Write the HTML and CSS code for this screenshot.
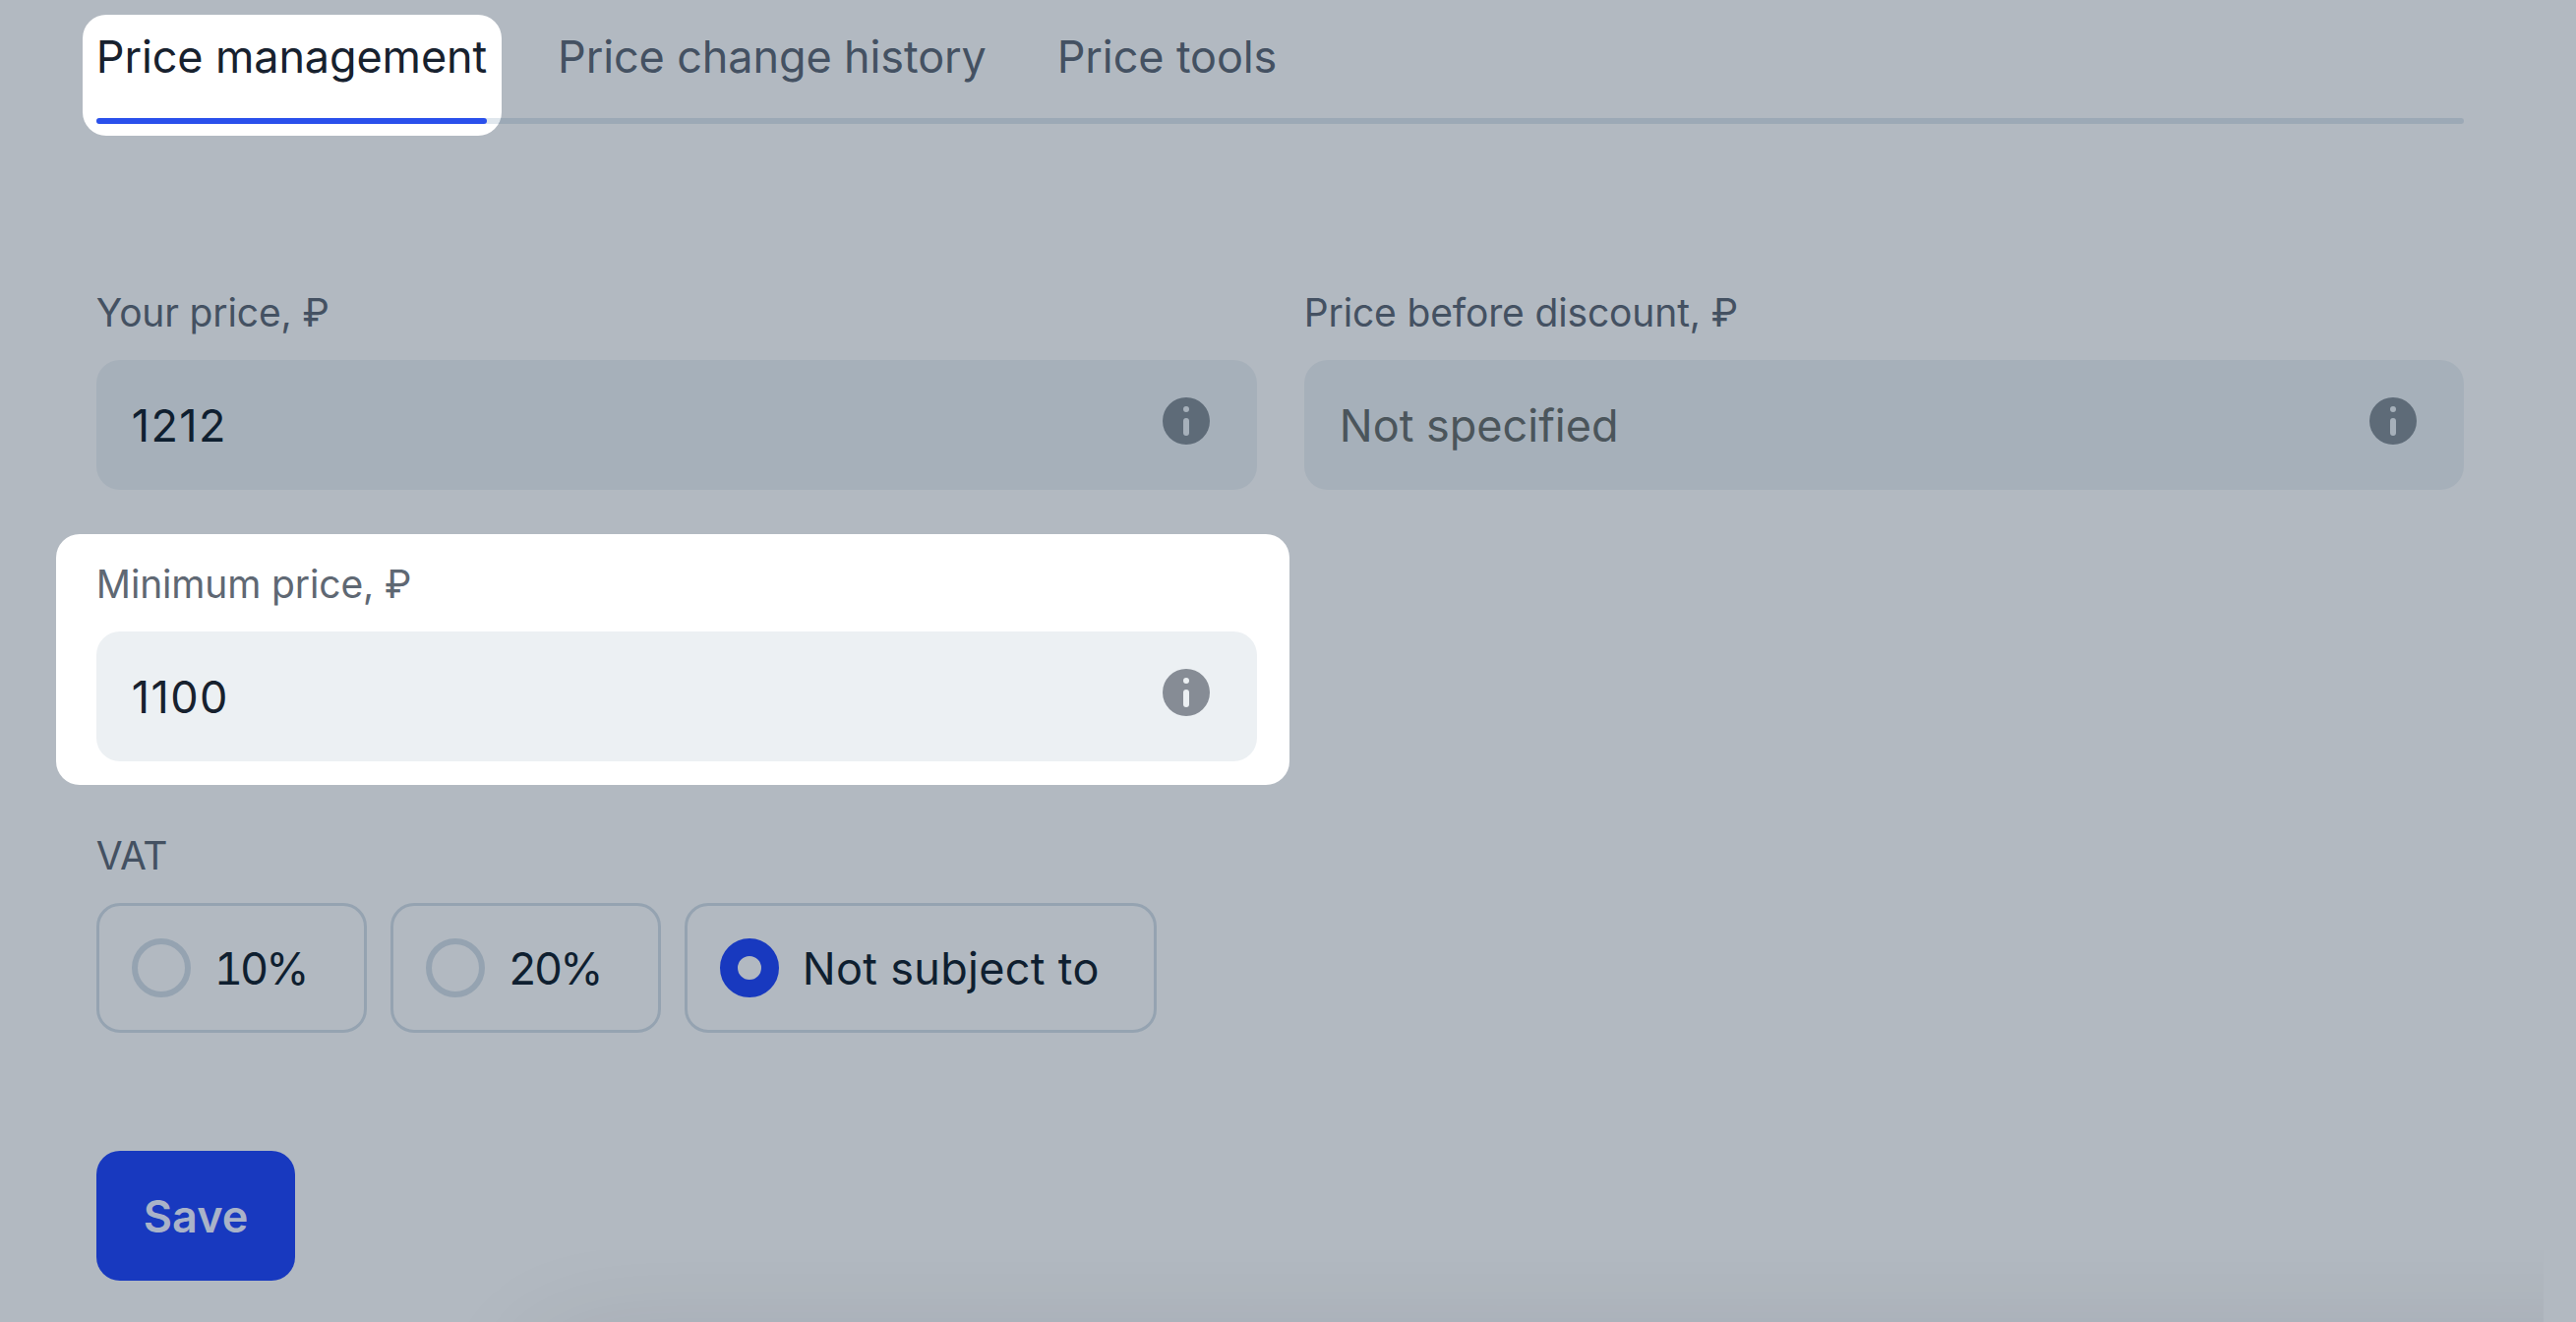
FILE: index.html
```html
<!DOCTYPE html>
<html lang="en">

<head>
    <meta charset="UTF-8">
    <meta name="viewport" content="width=device-width, initial-scale=1.0">
    <title>Price management</title>

    <link rel="stylesheet" href="styles.css">
</head>

<body>
    <svg class="sprite">
        <symbol id="info" viewBox="0 0 48 48">
            <circle cx="24" cy="24" r="24" fill="currentColor" />
            <circle class="info-mark" cx="24" cy="12" r="3" />
            <rect class="info-mark" x="21" y="21" width="6" height="18" rx="3" />
        </symbol>
    </svg>

    <main class="page">
        <nav class="tabs">
            <a class="tab active">Price management</a>
            <a class="tab">Price change history</a>
            <a class="tab">Price tools</a>
        </nav>

        <form class="form">
            <div class="fields">
                <div class="field">
                    <div class="label">Your price, ₽</div>
                    <div class="input">
                        <span class="value">1212</span>
                        <svg class="info"><use href="#info" /></svg>
                    </div>
                </div>
                <div class="field">
                    <div class="label">Price before discount, ₽</div>
                    <div class="input">
                        <span class="placeholder">Not specified</span>
                        <svg class="info"><use href="#info" /></svg>
                    </div>
                </div>
                <div class="field spotlight">
                    <div class="label">Minimum price, ₽</div>
                    <div class="input">
                        <span class="value">1100</span>
                        <svg class="info"><use href="#info" /></svg>
                    </div>
                </div>
            </div>

            <div class="vat">
                <div class="label">VAT</div>
                <div class="options">
                    <div class="option">
                        <span class="radio"></span>
                        <span class="percent">10%</span>
                    </div>
                    <div class="option">
                        <span class="radio"></span>
                        <span class="percent">20%</span>
                    </div>
                    <div class="option">
                        <span class="radio checked"></span>
                        <span class="option-text">Not subject to</span>
                    </div>
                </div>
            </div>

            <button type="button" class="save">Save</button>
        </form>
    </main>

    <!-- shadow of the bar that sits below the fold -->
    <div class="bottom-shadow"></div>
</body>

</html>
```

FILE: styles.css
```css
* {
    box-sizing: border-box;
}

body {
    margin: 0;
    height: 1344px;
    overflow: hidden;
    position: relative;
    background: #b2b9c1;
    color: #0f1f30;
    font-family: Inter, "Liberation Sans", sans-serif;
    font-size: 45px;
    line-height: 54px;
}

.sprite {
    display: none;
}

.page {
    padding: 0 114px 0 97.8px;
}

/* tabs */
.tabs {
    position: relative;
    z-index: 0;
    display: flex;
    gap: 72px;
    height: 126px;
    padding-top: 31px;
    letter-spacing: -0.12px;
    color: #445162;
}

.tabs::after {
    content: "";
    position: absolute;
    left: 0;
    right: 0;
    bottom: 0;
    height: 6px;
    border-radius: 3px;
    background: rgba(0, 60, 105, 0.12);
    z-index: -1;
}

.tab {
    position: relative;
    white-space: nowrap;
}

.tab.active {
    color: #17212e;
}

.tab.active::before {
    content: "";
    position: absolute;
    top: -16px;
    left: -14px;
    right: -15px;
    bottom: -12px;
    border-radius: 24px;
    background: #fff;
    z-index: -2;
}

.tab.active::after {
    content: "";
    position: absolute;
    left: 0;
    right: 0;
    bottom: 0;
    height: 6px;
    border-radius: 3px;
    background: #2a50ec;
}

/* fields */
.fields {
    display: grid;
    grid-template-columns: 1180px 1fr;
    gap: 71px 48px;
    margin-top: 167px;
}

.field {
    --input-bg: #a6b0ba;
    position: relative;
    z-index: 0;
}

.label {
    margin-bottom: 24px;
    padding-top: 1px;
    font-size: 39px;
    line-height: 48px;
    letter-spacing: -0.15px;
    color: #445162;
}

.input {
    display: flex;
    align-items: center;
    justify-content: space-between;
    height: 132px;
    padding: 0 48px 0 36px;
    border-radius: 24px;
    background: var(--input-bg);
}

.value,
.placeholder,
.percent,
.option-text {
    padding-top: 1px;
}

.value {
    letter-spacing: 1.4px;
}

.placeholder {
    color: #4b555b;
}

.info {
    width: 48px;
    height: 48px;
    margin-bottom: 9px;
    color: #5e6b78;
}

.info-mark {
    fill: var(--input-bg);
}

.spotlight {
    --input-bg: #ecf0f3;
}

.spotlight::before {
    content: "";
    position: absolute;
    top: -26px;
    left: -41px;
    right: -33px;
    bottom: -24px;
    border-radius: 24px;
    background: #fff;
    z-index: -1;
}

.spotlight .label {
    color: #5f6873;
}

.spotlight .value {
    color: #17212e;
}

.spotlight .info {
    color: #868c95;
}

/* vat */
.vat {
    margin-top: 71px;
}

.options {
    display: flex;
    gap: 24px;
}

.option {
    display: flex;
    align-items: center;
    gap: 24px;
    height: 132px;
    padding: 0 57px 0 33px;
    border: 3px solid #95a3b1;
    border-radius: 24px;
    white-space: nowrap;
}

.percent {
    width: 95px;
    font-variant-numeric: tabular-nums;
    letter-spacing: -3px;
}

.option-text {
    width: 300px;
    letter-spacing: 0.3px;
}

.radio {
    flex: none;
    width: 60px;
    height: 60px;
    border: 6px solid #95a3b1;
    border-radius: 50%;
}

.radio.checked {
    border: 18px solid #1839bf;
}

.save {
    display: block;
    height: 132px;
    margin-top: 120px;
    padding: 1px 48px 0;
    border: none;
    border-radius: 24px;
    background: #1839bf;
    color: #a9b3c8;
    font: 600 45px/54px Inter, "Liberation Sans", sans-serif;
}

.bottom-shadow {
    position: absolute;
    left: 0;
    bottom: 0;
    width: 2586px;
    height: 130px;
    overflow: hidden;
}

.bottom-shadow::after {
    content: "";
    position: absolute;
    top: 158px;
    left: 545px;
    right: -200px;
    height: 200px;
    border-radius: 48px;
    box-shadow: 0 0 120px rgba(0, 25, 30, 0.12);
}
```
